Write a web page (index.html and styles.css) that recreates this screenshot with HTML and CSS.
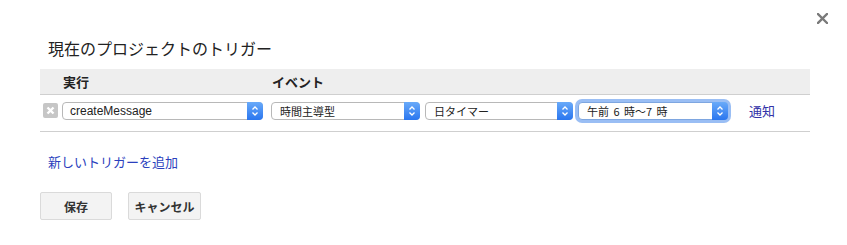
FILE: index.html
```html
<!DOCTYPE html>
<html lang="ja">
<head>
<meta charset="utf-8">
<title>トリガー</title>
<link rel="stylesheet" href="styles.css">
</head>
<body>
<div class="dialog">
  <button class="close" aria-label="閉じる">
    <svg width="11" height="11" viewBox="0 0 11 11"><path d="M1 1 L10 10 M10 1 L1 10" stroke="#7a7a7a" stroke-width="2.4" stroke-linecap="square"/></svg>
  </button>
  <h1 class="title">現在のプロジェクトのトリガー</h1>
  <div class="table">
    <div class="thead">
      <div class="th th-run">実行</div>
      <div class="th th-event">イベント</div>
    </div>
    <div class="trow">
      <span class="del">
        <svg width="15" height="15" viewBox="0 0 15 15"><path d="M4.5 4.5 L10.5 10.5 M10.5 4.5 L4.5 10.5" stroke="#fff" stroke-width="2.4"/></svg>
      </span>
      <div class="select s1"><span class="val">createMessage</span><span class="step"><svg width="8" height="12" viewBox="0 0 8 12"><path d="M1.5 4.5 L4 2 L6.5 4.5 M1.5 7.5 L4 10 L6.5 7.5" fill="none" stroke="#fff" stroke-width="1.3"/></svg></span></div>
      <div class="select s2"><span class="val">時間主導型</span><span class="step"><svg width="8" height="12" viewBox="0 0 8 12"><path d="M1.5 4.5 L4 2 L6.5 4.5 M1.5 7.5 L4 10 L6.5 7.5" fill="none" stroke="#fff" stroke-width="1.3"/></svg></span></div>
      <div class="select s3"><span class="val">日タイマー</span><span class="step"><svg width="8" height="12" viewBox="0 0 8 12"><path d="M1.5 4.5 L4 2 L6.5 4.5 M1.5 7.5 L4 10 L6.5 7.5" fill="none" stroke="#fff" stroke-width="1.3"/></svg></span></div>
      <div class="select s4 focus"><span class="val">午前&nbsp;6&nbsp;時〜7&nbsp;時</span><span class="step"><svg width="8" height="12" viewBox="0 0 8 12"><path d="M1.5 4.5 L4 2 L6.5 4.5 M1.5 7.5 L4 10 L6.5 7.5" fill="none" stroke="#fff" stroke-width="1.3"/></svg></span></div>
      <a class="notify" href="#">通知</a>
    </div>
  </div>
  <a class="add" href="#">新しいトリガーを追加</a>
  <div class="buttons">
    <button class="btn save">保存</button>
    <button class="btn cancel">キャンセル</button>
  </div>
</div>
</body>
</html>
```
FILE: styles.css
```css
* { box-sizing: border-box; }
html, body {
  margin: 0;
  padding: 0;
  background: #fff;
}
body {
  font-family: "Noto Sans CJK JP", "Noto Sans", sans-serif;
  color: #222;
  width: 847px;
  height: 245px;
  overflow: hidden;
}
.dialog {
  position: relative;
  padding: 40px 37px 0 40px;
  display: flex;
  flex-direction: column;
  align-items: flex-start;
}
.close {
  position: absolute;
  top: 13px;
  left: 817px;
  width: 11px;
  height: 11px;
  padding: 0;
  border: 0;
  background: none;
  display: block;
}
.close svg { display: block; }
.title {
  margin: 0 0 13px 8px;
  font-size: 16px;
  line-height: 16px;
  font-weight: normal;
  color: #222;
}
.table {
  width: 770px;
}
.thead {
  height: 26px;
  background: #eeeeee;
  border-bottom: 1px solid #cfcfcf;
  display: flex;
  align-items: center;
  font-size: 13px;
  font-weight: bold;
  color: #222;
}
.th-run { padding-left: 23px; width: 232px; }
.trow {
  height: 37px;
  border-bottom: 1px solid #cfcfcf;
  display: flex;
  align-items: flex-start;
  padding-top: 7px;
  padding-left: 3px;
}
.del {
  width: 15px;
  height: 15px;
  margin-top: 1px;
  background: #c6c6c6;
  border-radius: 2px;
  display: block;
  margin-right: 4px;
}
.del svg { display: block; }
.select {
  height: 18px;
  border: 1px solid #b8b8b8;
  border-radius: 4px;
  background: #fff;
  display: flex;
  align-items: center;
  font-family: "Liberation Sans", "Noto Sans CJK JP", sans-serif;
  font-size: 12px;
  color: #222;
}
.val {
  flex: 1;
  padding-left: 7px;
  line-height: 16px;
  white-space: nowrap;
}
.step {
  width: 16px;
  height: 18px;
  margin: -1px -1px -1px 0;
  border-radius: 0 4px 4px 0;
  background: linear-gradient(#69aaf9, #2a76ef);
  display: flex;
  align-items: center;
  justify-content: center;
}
.step svg { display: block; }
.s1 { width: 201px; margin-right: 8px; }
.s2 { width: 149px; margin-right: 5px; }
.s3 { width: 148px; margin-right: 5px; }
.s4 { width: 150px; }
.s2 .val, .s3 .val, .s4 .val { padding-left: 8px; font-size: 11px; font-family: "Noto Sans CJK JP", sans-serif; }
.s4 .val { word-spacing: 2px; }
.focus {
  border-color: #7ea6e0;
  box-shadow: 0 0 0 3px rgba(120, 168, 240, 0.75);
}
.notify {
  margin-left: 21px;
  margin-top: 1px;
  font-size: 13px;
  line-height: 16px;
  color: #3333a8;
  text-decoration: none;
}
.add {
  margin: 22px 0 0 8px;
  font-size: 13px;
  line-height: 16px;
  color: #2b3fbd;
  text-decoration: none;
}
.buttons {
  display: flex;
  gap: 16px;
  margin-top: 22px;
}
.btn {
  height: 28px;
  border: 1px solid #dadada;
  border-radius: 2px;
  background: #f3f3f3;
  font-family: "Noto Sans CJK JP", sans-serif;
  font-size: 12px;
  font-weight: bold;
  color: #333;
  padding: 0;
}
.save { width: 72px; }
.cancel { width: 73px; }
```
